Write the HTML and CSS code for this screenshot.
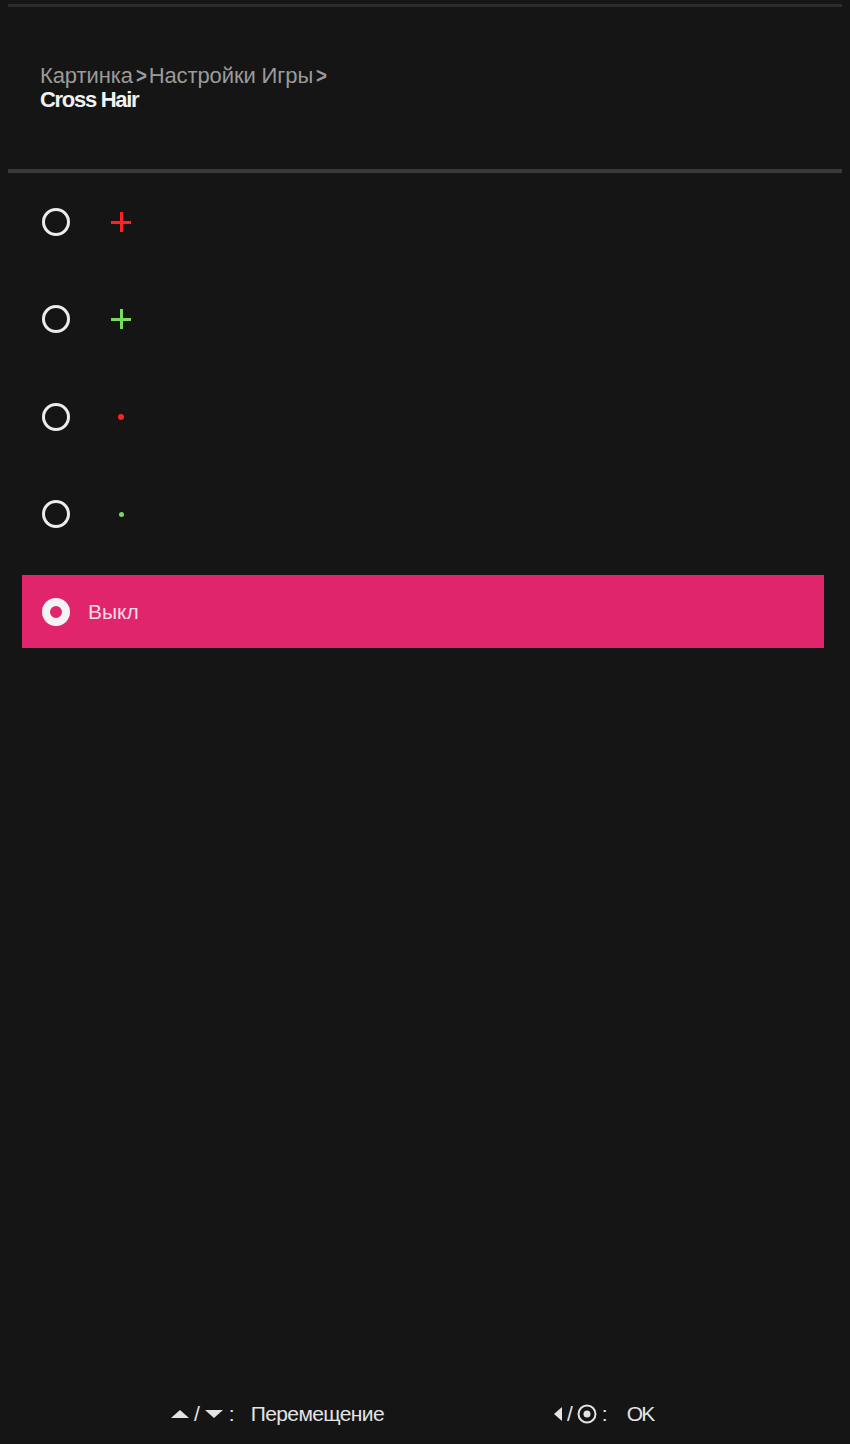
FILE: index.html
```html
<!DOCTYPE html>
<html lang="ru">
<head>
<meta charset="utf-8">
<title>Cross Hair</title>
<link rel="stylesheet" href="styles.css">
</head>
<body>
<div class="screen">
  <div class="rule rule-top"></div>
  <header class="header">
    <div class="crumbs">Картинка<span class="chev">&gt;</span>Настройки Игры<span class="chev">&gt;</span></div>
    <div class="title">Cross Hair</div>
  </header>
  <div class="rule rule-mid"></div>
  <ul class="options">
    <li class="option"><span class="radio"></span><span class="mark plus red"></span></li>
    <li class="option"><span class="radio"></span><span class="mark plus green"></span></li>
    <li class="option"><span class="radio"></span><span class="mark dot red"></span></li>
    <li class="option"><span class="radio"></span><span class="mark dot small green"></span></li>
    <li class="option selected"><div class="bar"><span class="radio on"></span><span class="label">Выкл</span></div></li>
  </ul>
  <div class="spacer"></div>
  <footer class="footer">
    <div class="hint hint-move">
      <span class="keys"><svg width="20" height="12" viewBox="0 0 20 12"><polygon points="1,10 10,2 19,10" fill="#e4e4e4"/></svg><span class="slash">/</span><svg width="20" height="12" viewBox="0 0 20 12"><polygon points="1,2 10,10 19,2" fill="#e4e4e4"/></svg><span class="colon">:</span></span>
      <span class="hint-text">Перемещение</span>
    </div>
    <div class="hint">
      <span class="keys"><svg width="10" height="16" viewBox="0 0 10 16"><polygon points="9,1 9,15 1,8" fill="#e4e4e4"/></svg><span class="slash">/</span><svg width="20" height="20" viewBox="0 0 20 20"><circle cx="10" cy="10" r="8.5" fill="none" stroke="#e4e4e4" stroke-width="2"/><circle cx="10" cy="10" r="3.5" fill="#e4e4e4"/></svg><span class="colon">:</span></span>
      <span class="hint-text ok">OK</span>
    </div>
  </footer>
</div>
</body>
</html>
```
FILE: styles.css
```css
* { box-sizing: border-box; }
html, body { margin: 0; padding: 0; }
body {
  background: #141414;
  font-family: "Liberation Sans", Arial, sans-serif;
  color: #e6e6e6;
}
.screen {
  width: 850px;
  height: 1444px;
  display: flex;
  flex-direction: column;
  background: #151515;
}
.rule {
  margin: 0 8px;
  height: 3px;
  background: #2c2c2c;
}
.rule-top { margin-top: 4px; }
.rule-mid { height: 4px; background: #393939; }
.header {
  height: 162px;
  padding: 57px 0 0 40px;
}
.crumbs {
  font-size: 22px;
  line-height: 24px;
  color: #9b9b9b;
  letter-spacing: -0.1px;
}
.chev {
  display: inline-block;
  margin: 0 1px 0 2px;
  font-weight: bold;
  transform: scaleX(0.85);
}
.title {
  font-size: 22px;
  line-height: 24px;
  color: #f2f2f2;
  font-weight: bold;
  letter-spacing: -1.3px;
}
.options {
  list-style: none;
  margin: 0;
  padding: 0;
}
.option {
  height: 97.5px;
  display: flex;
  align-items: center;
  padding-left: 42px;
}
.radio {
  width: 28px;
  height: 28px;
  border-radius: 50%;
  border: 3px solid #ececec;
  flex: none;
}
.radio.on {
  border-width: 8px;
  background: #e0266c;
  border-color: #f4f4f4;
}
.mark {
  flex: none;
  margin-left: 41px;
  position: relative;
  width: 20px;
  height: 20px;
}
.plus::before, .plus::after {
  content: "";
  position: absolute;
  background: currentColor;
}
.plus::before { left: 0; right: 0; top: 9px; height: 3px; }
.plus::after { top: 0; bottom: 0; left: 9px; width: 3px; }
.red { color: #ff2222; }
.green { color: #78dc5a; }
.dot::before {
  content: "";
  position: absolute;
  left: 7px;
  top: 7px;
  width: 6px;
  height: 6px;
  border-radius: 50%;
  background: currentColor;
}
.dot.small::before { left: 8px; top: 8px; width: 5px; height: 5px; }
.option.selected {
  padding-left: 22px;
  padding-right: 26px;
}
.bar {
  flex: 1;
  height: 73px;
  background: #e0256c;
  display: flex;
  align-items: center;
  padding-left: 20px;
}
.label {
  margin-left: 18px;
  font-size: 21px;
  color: #f3dce4;
  letter-spacing: 0;
}
.spacer { flex: 1; }
.footer {
  height: 46px;
  display: flex;
  padding-left: 170px;
}
.hint {
  display: flex;
  align-items: center;
  height: 32px;
  font-size: 21px;
  color: #e4e4e4;
}
.hint-move { width: 383px; }
.keys {
  display: flex;
  align-items: center;
  gap: 2px;
}
.slash { margin: 0 2px; }
.colon { margin-left: 3px; }
.hint-text { margin-left: 16px; letter-spacing: -0.6px; }
.hint-text.ok { margin-left: 19px; letter-spacing: -1.8px; }
```
